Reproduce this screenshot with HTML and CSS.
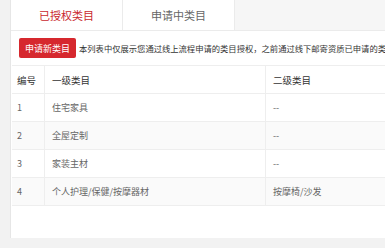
FILE: index.html
```html
<!DOCTYPE html>
<html>
<head>
    <link rel="stylesheet" href="styles.css">
</head>
<body>
    <div class="panel">
        <div class="tabs">
            <div class="tab active">已授权类目</div>
            <div class="tab">申请中类目</div>
        </div>
        <div class="content">
            <div class="toolbar">
                <button class="btn-apply">申请新类目</button>
                <span class="tip">本列表中仅展示您通过线上流程申请的类目授权，之前通过线下邮寄资质已申请的类目</span>
            </div>
            <table class="cat-table">
                <thead>
                    <tr>
                        <th class="col-no">编号</th>
                        <th class="col-first">一级类目</th>
                        <th>二级类目</th>
                    </tr>
                </thead>
                <tbody>
                    <tr><td>1</td><td>住宅家具</td><td>--</td></tr>
                    <tr><td>2</td><td>全屋定制</td><td>--</td></tr>
                    <tr><td>3</td><td>家装主材</td><td>--</td></tr>
                    <tr><td>4</td><td>个人护理/保健/按摩器材</td><td>按摩椅/沙发</td></tr>
                </tbody>
            </table>
        </div>
    </div>
</body>
</html>
```

FILE: styles.css
```css
body {
    margin: 0;
    background-color: #f2f2f2;
    font-family: "Microsoft YaHei", "Noto Sans CJK SC", sans-serif;
    overflow: hidden;
}
.panel {
    margin-left: 10px;
    width: 560px;
    height: 238px;
    background-color: white;
    border-left: 1px solid #e6e6e6;
}
.tabs {
    display: flex;
    height: 30px;
    background-color: #f6f6f6;
    border-bottom: 1px solid #ebebeb;
}
.tab {
    width: 111px;
    line-height: 30px;
    text-align: center;
    font-size: 11px;
    color: #666;
    background-color: white;
    border-right: 1px solid #ebebeb;
}
.tab.active {
    color: #c9282e;
}
.content {
    padding: 7px 0 0 1px;
}
.toolbar {
    display: flex;
    align-items: center;
    width: 366px;
    margin-left: 7px;
    margin-bottom: 7px;
    white-space: nowrap;
    overflow: hidden;
}
.btn-apply {
    flex-shrink: 0;
    width: 57px;
    height: 20px;
    padding: 0;
    border: none;
    border-radius: 2px;
    background-color: #d6282e;
    color: white;
    font-family: inherit;
    font-size: 9px;
}
.tip {
    margin-left: 3px;
    font-size: 8.3px;
    color: #333;
}
.cat-table {
    width: 540px;
    border-collapse: collapse;
    font-size: 9px;
    color: #666;
}
.cat-table th, .cat-table td {
    height: 27px;
    padding: 0 0 0 7px;
    text-align: left;
    border: 1px solid #eeeeee;
    border-left: none;
}
.cat-table th {
    font-weight: normal;
    color: #333;
    font-size: 9.5px;
}
.cat-table th:first-child, .cat-table td:first-child {
    padding-left: 5px;
}
.col-no {
    width: 27px;
}
.col-first {
    width: 213px;
}
.cat-table tbody tr:nth-child(even) {
    background-color: #fafafa;
}
```
